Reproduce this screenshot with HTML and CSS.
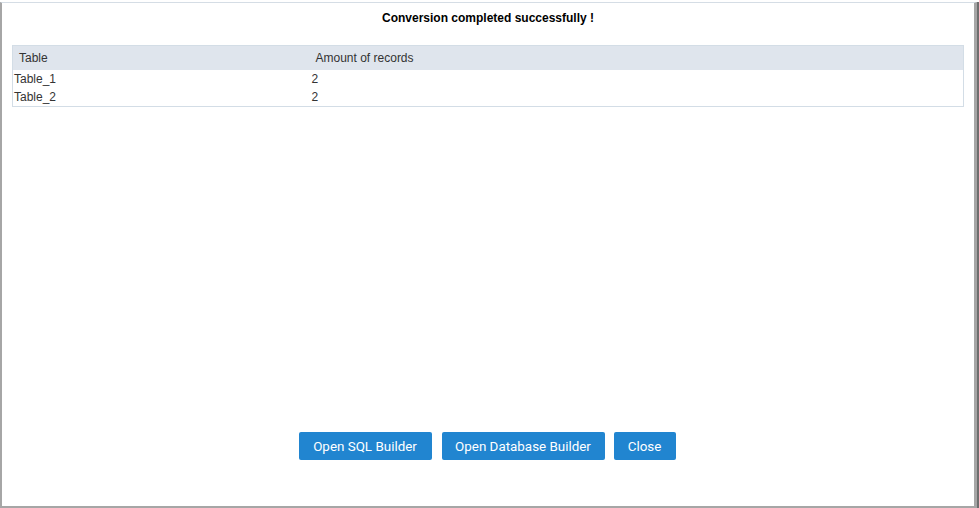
FILE: index.html
```html
<!DOCTYPE html>
<html>
<head>
<meta charset="utf-8">
<link rel="stylesheet" href="styles.css">
</head>
<body>
<div class="window">
  <div class="dialog">
    <div class="title">Conversion completed successfully !</div>
    <div class="table-wrap">
      <table class="grid">
        <colgroup><col class="col1"><col></colgroup>
        <thead>
          <tr><th>Table</th><th>Amount of records</th></tr>
        </thead>
        <tbody>
          <tr><td>Table_1</td><td class="num">2</td></tr>
          <tr><td>Table_2</td><td class="num">2</td></tr>
        </tbody>
      </table>
    </div>
    <div class="spacer"></div>
    <div class="buttons">
      <button class="btn btn-sql">Open SQL Builder</button>
      <button class="btn btn-db">Open Database Builder</button>
      <button class="btn btn-close">Close</button>
    </div>
  </div>
</div>
</body>
</html>
```
FILE: styles.css
```css
html, body {
  margin: 0;
  padding: 0;
  background: #ffffff;
}
body {
  padding-top: 2px;
  font-family: "Liberation Sans", Arial, sans-serif;
  font-size: 12px;
  color: #333333;
}
.window {
  width: 977px;
  height: 506px;
  border-right: 2px solid #6e6e6e;
}
.dialog {
  box-sizing: border-box;
  height: 506px;
  border-top: 1px solid #d5dde5;
  border-left: 2px solid #a6a6a6;
  border-bottom: 2px solid #a6a6a6;
  border-right: 3px solid #a6a6a6;
  display: flex;
  flex-direction: column;
}
.title {
  height: 31px;
  line-height: 31px;
  text-align: center;
  font-weight: bold;
  color: #000000;
}
.table-wrap {
  padding: 11px 10px 0 10px;
}
.grid {
  width: 952px;
  table-layout: fixed;
  border: 1px solid #d3dde6;
  border-collapse: collapse;
  border-spacing: 0;
}
.col1 {
  width: 297px;
}
.grid th {
  height: 24px;
  padding: 0 0 0 6px;
  background: #dfe5ed;
  font-weight: normal;
  text-align: left;
  color: #333333;
}
.grid td {
  height: 18px;
  padding: 0 0 0 1px;
  text-align: left;
}
.grid td.num {
  padding-left: 2px;
}
.spacer {
  flex: 1;
}
.buttons {
  display: flex;
  justify-content: center;
  gap: 10px;
  padding-bottom: 46px;
  padding-right: 2px;
}
.btn {
  height: 28px;
  padding: 0;
  border: none;
  border-radius: 2px;
  background: #2185d0;
  color: #ffffff;
  font-family: Roboto, "Liberation Sans", sans-serif;
  font-size: 13.4px;
  text-align: center;
}
.btn-sql { width: 133px; }
.btn-db { width: 163px; }
.btn-close { width: 62px; margin-left: -1px; }
```
